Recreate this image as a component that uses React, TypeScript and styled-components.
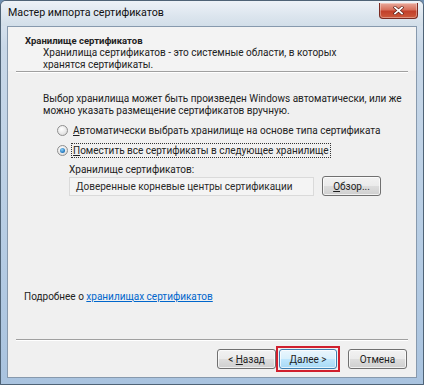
import styled, { createGlobalStyle } from "styled-components";

const GlobalStyle = createGlobalStyle`
  html, body {
    margin: 0;
    padding: 0;
    background: #6f8fb0;
  }
  body {
    font-family: Roboto, "Noto Sans", sans-serif;
    font-size: 10px;
    color: #222;
  }
`;

const Window = styled.div`
  width: 424px;
  height: 385px;
  box-sizing: border-box;
  display: flex;
  flex-direction: column;
  border: 1px solid #4f6376;
  border-radius: 6px 6px 0 0;
  background: linear-gradient(180deg, #e4ebf2 0%, #c9d8e8 12%, #b7cde4 60%, #a9c3df 100%);
  overflow: hidden;
`;

const TitleBar = styled.div`
  height: 25px;
  flex: none;
  display: flex;
  align-items: flex-start;
  justify-content: space-between;
  padding: 0 5px 0 7px;
  background: linear-gradient(180deg, #edf2f7 0%, #dce5ee 60%, #d2dee9 100%);
`;

const Title = styled.span`
  font-size: 10.7px;
  line-height: 24px;
  color: #111;
`;

const CloseButton = styled.div`
  width: 37px;
  height: 15px;
  margin-top: 2px;
  border: 1px solid #7a2a21;
  border-top: none;
  border-radius: 0 0 4px 4px;
  background: linear-gradient(180deg, #e9a99b 0%, #d7705c 45%, #c2402a 55%, #cd5a3c 100%);
  display: flex;
  align-items: center;
  justify-content: center;
  box-shadow: inset 0 0 0 1px rgba(255, 255, 255, 0.35);
`;

const Client = styled.div`
  flex: 1;
  margin: 0 6px 6px;
  display: flex;
  flex-direction: column;
  background: #f0f0f0;
  border: 1px solid #8799ad;
`;

const Header = styled.div`
  height: 44px;
  flex: none;
  box-sizing: border-box;
  padding: 8px 0 0 17px;
  background: #f3f3f3;
`;

const HeaderTitle = styled.div`
  font-weight: 700;
  font-size: 9.5px;
  line-height: 12px;
`;

const HeaderText = styled.div`
  padding-left: 18px;
  line-height: 12px;
`;

const Separator = styled.div`
  height: 0;
  margin: 0 8px;
  border-top: 1px solid #a0a0a0;
  border-bottom: 1px solid #ffffff;
`;

const Body = styled.div`
  flex: 1;
  display: flex;
  flex-direction: column;
  padding: 20px 0 0 35px;
`;

const Paragraph = styled.div`
  line-height: 12px;
`;

const Options = styled.div`
  display: flex;
  flex-direction: column;
  gap: 6px;
  margin: 6px 0 0 14px;
`;

const Option = styled.div`
  display: flex;
  align-items: center;
  gap: 3px;
  height: 14px;
`;

const Radio = styled.span<{ $checked?: boolean }>`
  width: 11px;
  height: 11px;
  box-sizing: border-box;
  border-radius: 50%;
  border: 1px solid #8f8f8f;
  background: radial-gradient(circle at 40% 35%, #ffffff 0%, #e8e8e8 55%, #cfcfcf 100%);
  display: flex;
  align-items: center;
  justify-content: center;
  &::after {
    content: "";
    display: ${(p) => (p.$checked ? "block" : "none")};
    width: 5px;
    height: 5px;
    border-radius: 50%;
    background: radial-gradient(circle at 40% 35%, #8fd0f5 0%, #2a7fc4 60%, #15508c 100%);
  }
`;

const OptionLabel = styled.span<{ $focused?: boolean }>`
  padding: 0 1px;
  line-height: 13px;
  border: 1px dotted ${(p) => (p.$focused ? "#333" : "transparent")};
`;

const StoreBlock = styled.div`
  display: flex;
  flex-direction: column;
  gap: 1px;
  margin: 7px 0 0 26px;
`;

const StoreRow = styled.div`
  display: flex;
  align-items: center;
  gap: 8px;
`;

const TextBox = styled.div`
  width: 245px;
  height: 19px;
  box-sizing: border-box;
  border: 1px solid #dadada;
  background: #f4f4f4;
  padding: 0 6px;
  line-height: 17px;
  color: #2a2a2a;
  white-space: nowrap;
`;

const Button = styled.div<{ $default?: boolean }>`
  width: ${(p) => (p.$default ? "58px" : "59px")};
  height: 20px;
  box-sizing: border-box;
  display: flex;
  align-items: center;
  justify-content: center;
  border: 1px solid ${(p) => (p.$default ? "#3c7fb1" : "#707070")};
  border-radius: 3px;
  background: ${(p) =>
    p.$default
      ? "linear-gradient(180deg, #eaf6fd 0%, #d9f0fc 48%, #bee6fd 52%, #a7d9f5 100%)"
      : "linear-gradient(180deg, #f2f2f2 0%, #ebebeb 48%, #dddddd 52%, #cfcfcf 100%)"};
  box-shadow: inset 0 0 0 1px rgba(255, 255, 255, 0.7);
  color: #1e1e1e;
  white-space: nowrap;
`;

const Highlight = styled.div`
  padding: 1px;
  border: 2px solid #d01f2d;
  display: flex;
`;

const Footer = styled.div`
  flex: none;
  padding: 0 0 37px 16px;
`;

const Link = styled.span`
  color: #0066cc;
  text-decoration: underline;
`;

const ButtonRow = styled.div`
  flex: none;
  height: 36px;
  display: flex;
  align-items: center;
  justify-content: flex-end;
  padding: 0 9px 0 0;
`;

const Gap = styled.span<{ $w: number }>`
  width: ${(p) => p.$w}px;
  flex: none;
`;

export default function App() {
  return (
    <>
      <GlobalStyle />
      <Window>
        <TitleBar>
          <Title>Мастер импорта сертификатов</Title>
          <CloseButton>
            <svg width="11" height="9" viewBox="0 0 11 9">
              <path d="M2 1.5 L9 7.5 M9 1.5 L2 7.5" stroke="#5a1e16" strokeWidth="3" strokeLinecap="square" />
              <path d="M2 1.5 L9 7.5 M9 1.5 L2 7.5" stroke="#ffffff" strokeWidth="1.7" strokeLinecap="square" />
            </svg>
          </CloseButton>
        </TitleBar>
        <Client>
          <Header>
            <HeaderTitle>Хранилище сертификатов</HeaderTitle>
            <HeaderText>
              Хранилища сертификатов - это системные области, в которых
              <br />
              хранятся сертификаты.
            </HeaderText>
          </Header>
          <Separator />
          <Body>
            <Paragraph>
              Выбор хранилища может быть произведен Windows автоматически, или же
              <br />
              можно указать размещение сертификатов вручную.
            </Paragraph>
            <Options>
              <Option>
                <Radio />
                <OptionLabel>
                  <u>А</u>втоматически выбрать хранилище на основе типа сертификата
                </OptionLabel>
              </Option>
              <Option>
                <Radio $checked />
                <OptionLabel $focused>
                  <u>П</u>оместить все сертификаты в следующее хранилище
                </OptionLabel>
              </Option>
            </Options>
            <StoreBlock>
              <span>Хранилище сертификатов:</span>
              <StoreRow>
                <TextBox>Доверенные корневые центры сертификации</TextBox>
                <Button>
                  <u>О</u>бзор...
                </Button>
              </StoreRow>
            </StoreBlock>
          </Body>
          <Footer>
            Подробнее о <Link>хранилищах сертификатов</Link>
          </Footer>
          <Separator />
          <ButtonRow>
            <Button>
              &lt;&nbsp;<u>Н</u>азад
            </Button>
            <Highlight>
              <Button $default>
                <u>Д</u>алее &gt;
              </Button>
            </Highlight>
            <Gap $w={8} />
            <Button>Отмена</Button>
          </ButtonRow>
        </Client>
      </Window>
    </>
  );
}
